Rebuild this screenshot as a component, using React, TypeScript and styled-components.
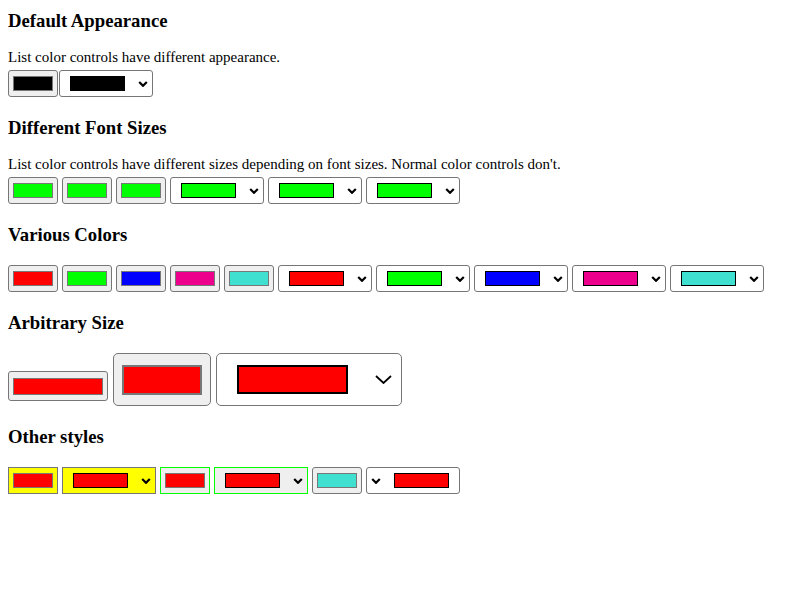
import React from "react";
import styled, { createGlobalStyle } from "styled-components";

const Global = createGlobalStyle`
  html, body { margin: 0; padding: 0; background: #ffffff; }
  body {
    font-family: "Liberation Serif", "Times New Roman", serif;
    font-size: 16px;
    color: #000000;
  }
`;

const Page = styled.div`
  padding: 10px 8px 0;
`;

const Section = styled.section`
  display: flex;
  flex-direction: column;
  align-items: flex-start;
  margin-bottom: 20px;
`;

const Heading = styled.h3`
  margin: 0 0 18px;
  font-size: 18.72px;
  line-height: 21px;
  font-weight: bold;
`;

const Note = styled.p`
  margin: 0 0 2px;
  font-size: 15px;
  line-height: 17px;
`;

const Row = styled.div<{ $gap: number }>`
  display: flex;
  align-items: flex-end;
  gap: ${(p) => p.$gap}px;
  margin-top: 2px;
`;

const SwatchButton = styled.div<{
  $w: number;
  $h: number;
  $bg: string;
  $edge: string;
  $radius: number;
  $lift: number;
}>`
  box-sizing: border-box;
  display: flex;
  align-items: center;
  justify-content: center;
  width: ${(p) => p.$w}px;
  height: ${(p) => p.$h}px;
  background: ${(p) => p.$bg};
  border: 1px solid ${(p) => p.$edge};
  border-radius: ${(p) => p.$radius}px;
  margin-bottom: ${(p) => p.$lift}px;
`;

const SwatchSelect = styled.div<{
  $w: number;
  $h: number;
  $bg: string;
  $edge: string;
  $radius: number;
  $rtl: boolean;
  $pad: number;
  $gap: number;
}>`
  box-sizing: border-box;
  display: flex;
  flex-direction: ${(p) => (p.$rtl ? "row-reverse" : "row")};
  align-items: center;
  gap: ${(p) => p.$gap}px;
  width: ${(p) => p.$w}px;
  height: ${(p) => p.$h}px;
  padding: 0 ${(p) => p.$pad}px;
  background: ${(p) => p.$bg};
  border: 1px solid ${(p) => p.$edge};
  border-radius: ${(p) => p.$radius}px;
`;

const Swatch = styled.span<{
  $w: number;
  $h: number;
  $fill: string;
  $edge: string;
  $bw: number;
}>`
  box-sizing: border-box;
  display: block;
  flex: none;
  width: ${(p) => p.$w}px;
  height: ${(p) => p.$h}px;
  background: ${(p) => p.$fill};
  border: ${(p) => p.$bw}px solid ${(p) => p.$edge};
`;

const ChevronBox = styled.svg`
  display: block;
  flex: none;
`;

const SmallChevron = () => (
  <ChevronBox width="10" height="6" viewBox="0 0 10 6">
    <path d="M1.2 1 L5 4.8 L8.8 1" fill="none" stroke="#000" strokeWidth="2.2" />
  </ChevronBox>
);

const LargeChevron = () => (
  <ChevronBox width="17" height="9" viewBox="0 0 17 9">
    <path d="M1 1 L8.5 8 L16 1" fill="none" stroke="#000" strokeWidth="1.8" />
  </ChevronBox>
);

type ButtonProps = {
  color: string;
  bg?: string;
  edge?: string;
  radius?: number;
  w?: number;
  h?: number;
  sw?: number;
  sh?: number;
  bw?: number;
  lift?: number;
};

const ColorButton = ({
  color,
  bg = "#efefef",
  edge = "#767676",
  radius = 3,
  w = 50,
  h = 27,
  sw = 40,
  sh = 15,
  bw = 1,
  lift = 0,
}: ButtonProps) => (
  <SwatchButton $w={w} $h={h} $bg={bg} $edge={edge} $radius={radius} $lift={lift}>
    <Swatch $w={sw} $h={sh} $fill={color} $edge="#777777" $bw={bw} />
  </SwatchButton>
);

type SelectProps = {
  color: string;
  bg?: string;
  edge?: string;
  radius?: number;
  rtl?: boolean;
  large?: boolean;
};

const ColorSelect = ({
  color,
  bg = "#ffffff",
  edge = "#767676",
  radius = 3,
  rtl = false,
  large = false,
}: SelectProps) =>
  large ? (
    <SwatchSelect $w={186} $h={53} $bg={bg} $edge={edge} $radius={5} $rtl={rtl} $pad={20} $gap={27}>
      <Swatch $w={111} $h={29} $fill={color} $edge="#000" $bw={2} />
      <LargeChevron />
    </SwatchSelect>
  ) : (
    <SwatchSelect $w={94} $h={27} $bg={bg} $edge={edge} $radius={radius} $rtl={rtl} $pad={10} $gap={13}>
      <Swatch $w={55} $h={15} $fill={color} $edge="#000" $bw={1} />
      <SmallChevron />
    </SwatchSelect>
  );

const RED = "#ff0000";
const LIME = "#00ff00";
const BLUE = "#0000ff";
const PINK = "#ec008c";
const TURQ = "#40e0d0";

const palette = [RED, LIME, BLUE, PINK, TURQ];

export default function App() {
  return (
    <>
      <Global />
      <Page>
        <Section>
          <Heading>Default Appearance</Heading>
          <Note>List color controls have different appearance.</Note>
          <Row $gap={1}>
            <ColorButton color="#000000" />
            <ColorSelect color="#000000" />
          </Row>
        </Section>

        <Section>
          <Heading>Different Font Sizes</Heading>
          <Note>
            List color controls have different sizes depending on font sizes. Normal color controls don't.
          </Note>
          <Row $gap={4}>
            <ColorButton color={LIME} />
            <ColorButton color={LIME} />
            <ColorButton color={LIME} />
            <ColorSelect color={LIME} />
            <ColorSelect color={LIME} />
            <ColorSelect color={LIME} />
          </Row>
        </Section>

        <Section>
          <Heading>Various Colors</Heading>
          <Row $gap={4}>
            {palette.map((c) => (
              <ColorButton key={"b" + c} color={c} />
            ))}
            {palette.map((c) => (
              <ColorSelect key={"s" + c} color={c} />
            ))}
          </Row>
        </Section>

        <Section>
          <Heading>Arbitrary Size</Heading>
          <Row $gap={5}>
            <ColorButton color={RED} w={100} h={30} sw={90} sh={17} lift={5} />
            <ColorButton color={RED} w={98} h={53} sw={80} sh={30} bw={2} radius={5} />
            <ColorSelect color={RED} large />
          </Row>
        </Section>

        <Section>
          <Heading>Other styles</Heading>
          <Row $gap={4}>
            <ColorButton color={RED} bg="#ffff00" radius={0} />
            <ColorSelect color={RED} bg="#ffff00" radius={0} />
            <ColorButton color={RED} edge={LIME} radius={0} />
            <ColorSelect color={RED} bg="#efefef" edge={LIME} radius={0} />
            <ColorButton color={TURQ} />
            <ColorSelect color={RED} rtl />
          </Row>
        </Section>
      </Page>
    </>
  );
}
